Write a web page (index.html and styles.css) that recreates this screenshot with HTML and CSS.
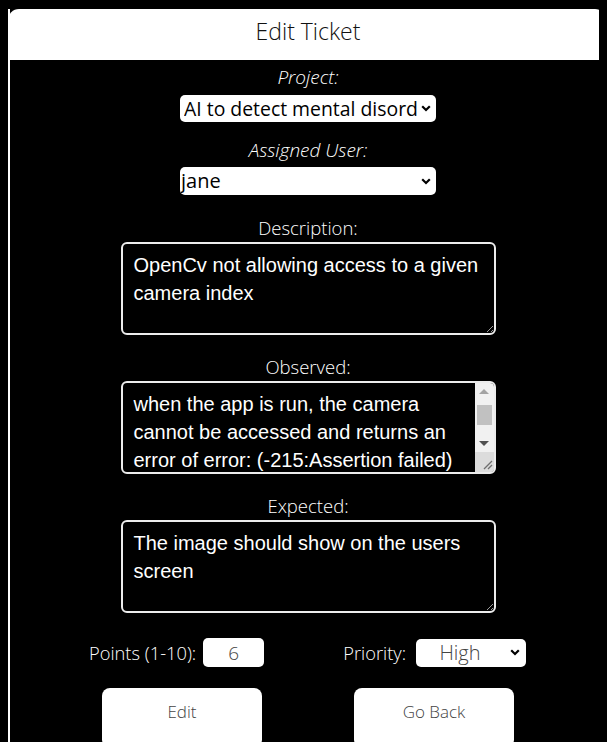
FILE: index.html
```html
<!DOCTYPE html>
<html lang="en">
<head>
<meta charset="utf-8">
<title>Edit Ticket</title>
<link rel="stylesheet" href="styles.css">
</head>
<body>
<div class="card">
  <div class="card-header">Edit Ticket</div>
  <form class="card-body">
    <label class="lbl italic lbl-first" for="project">Project:</label>
    <select id="project" class="sel sel-project">
      <option>AI to detect mental disorders</option>
    </select>
    <label class="lbl italic lbl-user" for="user">Assigned User:</label>
    <select id="user" class="sel sel-user">
      <option>jane</option>
    </select>
    <label class="lbl lbl-area lbl-desc" for="desc">Description:</label>
    <textarea id="desc" class="area">OpenCv not allowing access to a given camera index</textarea>
    <label class="lbl lbl-area" for="obs">Observed:</label>
    <div class="area-wrap">
      <textarea id="obs" class="area scroll">when the app is run, the camera cannot be accessed and returns an error of error: (-215:Assertion failed) !_src.empty() in function 'cv::cvtColor'</textarea>
      <div class="fake-sb" aria-hidden="true">
        <div class="sb-btn sb-up"><span class="tri-up"></span></div>
        <div class="sb-track"><div class="sb-thumb"></div></div>
        <div class="sb-btn sb-down"><span class="tri-down"></span></div>
        <div class="sb-corner">
          <svg width="20" height="20" viewBox="0 0 20 20"><path d="M17 9 L9 17 M17 13 L13 17" stroke="#6f6f6f" stroke-width="1.3" fill="none"/></svg>
        </div>
      </div>
    </div>
    <label class="lbl lbl-area" for="exp">Expected:</label>
    <textarea id="exp" class="area">The image should show on the users screen</textarea>
    <div class="row">
      <div class="field field-points">
        <label class="lbl-inline" for="points">Points (1-10):</label>
        <input id="points" class="num" type="text" value="6">
      </div>
      <div class="field field-priority">
        <label class="lbl-inline" for="prio">Priority:</label>
        <select id="prio" class="sel sel-prio">
          <option>High</option>
        </select>
      </div>
    </div>
    <div class="row buttons">
      <button type="button" class="btn">Edit</button>
      <button type="button" class="btn">Go Back</button>
    </div>
  </form>
</div>
</body>
</html>
```
FILE: styles.css
```css
html, body {
  background: #000;
}
body {
  margin: 8px;
  font-family: "Open Sans", "Noto Sans", sans-serif;
  color: #fff;
  overflow: hidden;
}
.card {
  border-left: 2px solid #fff;
  margin-top: 1px;
  width: 620px;
  box-sizing: border-box;
  height: 760px;
}
.card-header {
  background: #fff;
  color: #111;
  height: 51px;
  margin-left: -2px;
  width: 598px;
  border-radius: 11px 11px 0 0;
  font-weight: 300;
  font-size: 23px;
  line-height: 44px;
  text-align: center;
  box-sizing: border-box;
  padding-left: 2px;
}
.card-body {
  width: 596px;
  display: flex;
  flex-direction: column;
  align-items: center;
  margin: 0;
}
.lbl {
  display: block;
  font-size: 18.5px;
  font-weight: 300;
  line-height: 22px;
  text-align: center;
}
.italic {
  font-style: italic;
  font-size: 19px;
}
.lbl-first {
  margin-top: 6px;
}
.lbl-user {
  margin-top: 17px;
}
.lbl-area {
  margin-top: 21px;
}
.lbl-desc {
  margin-top: 22px;
}
.lbl-area + .area,
.lbl-area + .area-wrap {
  margin-top: 3px;
}
.sel {
  -webkit-appearance: none;
  appearance: none;
  font-family: "Open Sans", "Noto Sans", sans-serif;
  font-size: 20px;
  color: #000;
  background-color: #fff;
  background-image: url("data:image/svg+xml;utf8,<svg xmlns='http://www.w3.org/2000/svg' width='10' height='7' viewBox='0 0 10 7'><path d='M1.2 1.2 L5 5 L8.8 1.2' fill='none' stroke='black' stroke-width='2.2'/></svg>");
  background-repeat: no-repeat;
  background-position: right 5px center;
  border: none;
  border-radius: 5px;
  box-sizing: border-box;
  line-height: 26px;
}
.sel-project {
  width: 256px;
  height: 27px;
  margin-top: 7px;
  padding: 0 18px 0 4px;
  font-size: 19.4px;
}
.sel-user {
  width: 256px;
  height: 28px;
  margin-top: 6px;
  padding: 0 18px 0 1px;
}
.area {
  display: block;
  width: 375px;
  height: 93px;
  box-sizing: border-box;
  background: #000;
  color: #fff;
  border: 2px solid #ececec;
  border-radius: 6px;
  font-family: "Liberation Sans", Arial, sans-serif;
  font-size: 20px;
  line-height: 28px;
  padding: 7px 11px;
  resize: both;
  margin: 0;
}
.area-wrap {
  position: relative;
  width: 375px;
  height: 93px;
}
.scroll {
  overflow: hidden;
  resize: none;
  padding-right: 30px;
}
.fake-sb {
  position: absolute;
  top: 2px;
  right: 2px;
  bottom: 2px;
  width: 19px;
  display: flex;
  flex-direction: column;
  background: #f1f1f1;
  border-radius: 0 4px 4px 0;
  overflow: hidden;
}
.sb-btn {
  height: 17px;
  display: flex;
  align-items: center;
  justify-content: center;
}
.tri-up {
  width: 0;
  height: 0;
  border-left: 5px solid transparent;
  border-right: 5px solid transparent;
  border-bottom: 5px solid #a3a3a3;
}
.tri-down {
  width: 0;
  height: 0;
  border-left: 5px solid transparent;
  border-right: 5px solid transparent;
  border-top: 5px solid #505050;
}
.sb-track {
  flex: 1;
  padding: 5px 2px 0;
}
.sb-thumb {
  height: 20px;
  background: #c1c1c1;
}
.sb-corner {
  height: 20px;
  background: #dcdcdc;
}
.sb-corner svg {
  display: block;
}
.row {
  display: flex;
  width: 596px;
}
.field {
  display: flex;
  align-items: center;
}
.field-points {
  margin-top: 25px;
  margin-left: 79px;
}
.field-priority {
  margin-top: 25px;
  margin-left: 79px;
}
.lbl-inline {
  font-size: 18.3px;
  font-weight: 300;
}
.num {
  width: 61px;
  height: 29px;
  box-sizing: border-box;
  border: none;
  border-radius: 5px;
  margin-left: 7px;
  text-align: center;
  font-family: "Open Sans", "Noto Sans", sans-serif;
  font-size: 19px;
  font-weight: 300;
  color: #444;
  padding: 0;
}
.sel-prio {
  width: 110px;
  height: 28px;
  margin-left: 10px;
  font-weight: 300;
  color: #444;
  text-align: center;
  padding: 0 22px 0 0;
  background-position: right 6px center;
}
.buttons {
  margin-top: 21px;
  padding-left: 92px;
  gap: 92px;
  box-sizing: border-box;
}
.btn {
  width: 160px;
  height: 60px;
  background: #fff;
  border: none;
  border-radius: 8px;
  font-family: "Open Sans", "Noto Sans", sans-serif;
  font-size: 17px;
  font-weight: 300;
  color: #444;
  padding: 0 0 14px;
}
```
